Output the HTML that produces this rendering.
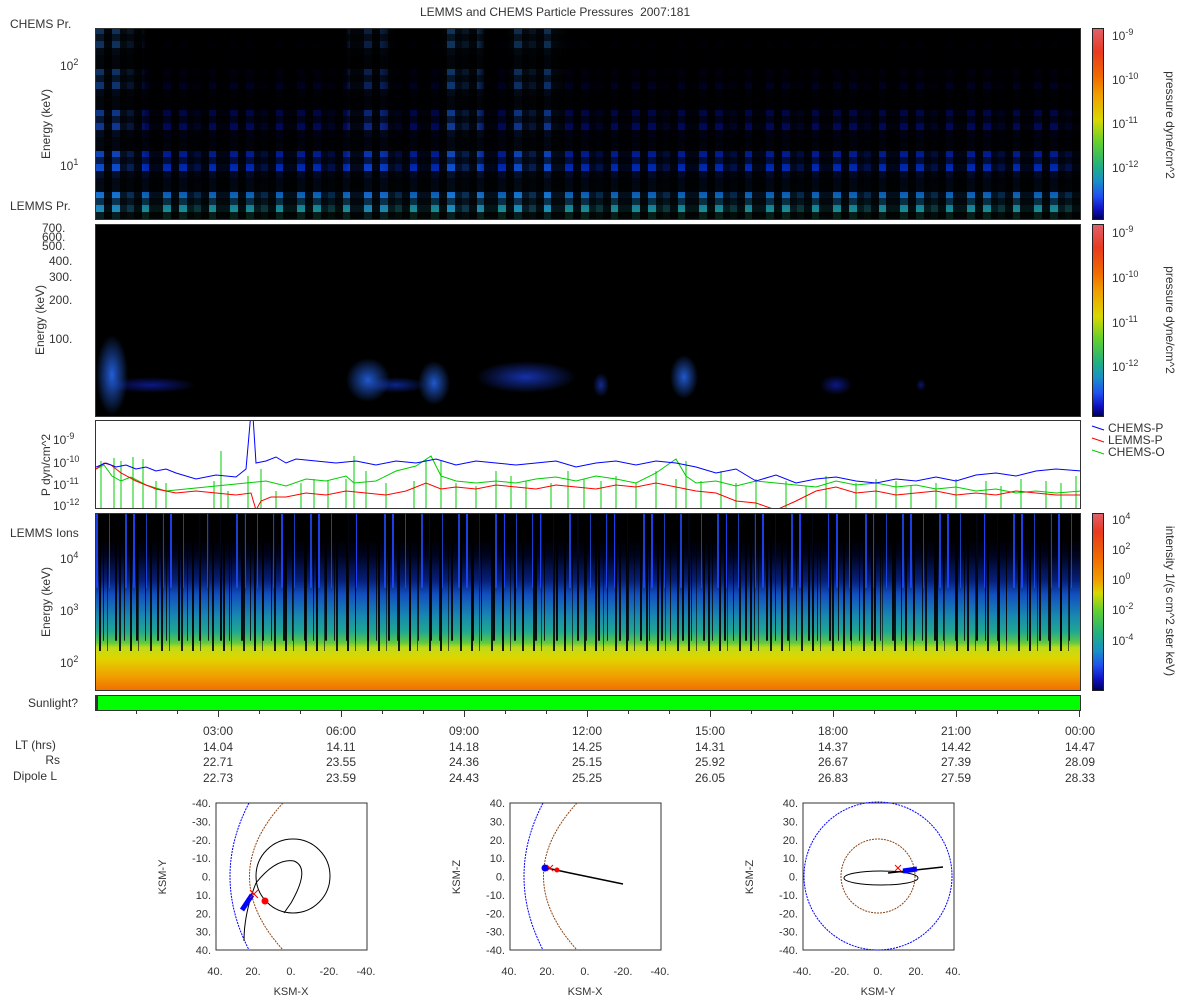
<!DOCTYPE html>
<html><head><meta charset="utf-8"><style>
*{margin:0;padding:0;box-sizing:border-box}
body{width:1200px;height:1000px;background:#fff;position:relative;overflow:hidden;font-family:"Liberation Sans",sans-serif;font-size:12px;color:#333}
.a{position:absolute}
.t{position:absolute;white-space:nowrap;line-height:12px}
.r{text-align:right}
.rot{transform:rotate(-90deg);transform-origin:center}
.rot90{transform:rotate(90deg);transform-origin:center}
.cb{position:absolute;left:1092px;width:12px;border:1px solid #222;background:linear-gradient(#e06068,#e83a20 12%,#f06a00 25%,#f0a000 35%,#d8d800 48%,#60d030 60%,#20b080 72%,#1890c8 80%,#2050f0 88%,#1010c0 95%,#000060)}
sup{font-size:9px;vertical-align:5px}
.tk{position:absolute;width:1px;height:6px;background:#333}
</style></head><body>
<div class="t" style="left:420px;top:6px">LEMMS and CHEMS Particle Pressures&nbsp; 2007:181</div>

<!-- Panel 1 -->
<div class="a" style="left:95px;top:28px;width:986px;height:192px;border:1px solid #333;background:
repeating-linear-gradient(90deg,transparent 0 8px,rgba(0,0,0,.9) 8px 16px,transparent 16px 24px,rgba(0,0,0,.8) 24px 31px,rgba(0,0,0,.6) 31px 38px,rgba(0,0,0,.9) 38px 46px,transparent 46px 53px,rgba(0,0,0,.85) 53px 67px),
repeating-linear-gradient(0deg,rgba(0,0,0,.8) 0 7px,transparent 7px 14px,rgba(0,0,0,.6) 14px 21px,transparent 21px 27px,rgba(0,0,0,.9) 27px 41px),
linear-gradient(90deg,rgba(40,140,255,.35) 0 35px,transparent 50px 250px,rgba(40,120,255,.25) 255px 285px,transparent 300px 345px,rgba(40,150,255,.35) 350px 380px,transparent 390px 410px,rgba(40,150,255,.3) 415px 460px,transparent 470px),
linear-gradient(#000 0,#000010 25%,#000a60 55%,#0030c0 78%,#1070b0 90%,#20a070 100%)"></div>
<div class="t" style="left:10px;top:18px">CHEMS Pr.</div>
<div class="t" style="left:10px;top:200px">LEMMS Pr.</div>
<div class="t" style="left:60px;top:56px">10<sup>2</sup></div>
<div class="t" style="left:60px;top:156px">10<sup>1</sup></div>
<div class="t rot" style="left:6px;top:118px;width:80px;text-align:center">Energy (keV)</div>
<div class="cb" style="top:28px;height:192px"></div>
<div class="t" style="left:1112px;top:26px">10<sup>-9</sup></div>
<div class="t" style="left:1112px;top:70px">10<sup>-10</sup></div>
<div class="t" style="left:1112px;top:114px">10<sup>-11</sup></div>
<div class="t" style="left:1112px;top:158px">10<sup>-12</sup></div>
<div class="t rot90" style="left:1115px;top:119px;width:110px;text-align:center">pressure dyne/cm^2</div>

<!-- Panel 2 -->
<div class="a" style="left:95px;top:224px;width:986px;height:193px;border:1px solid #333;background:
radial-gradient(ellipse 16px 40px at 16px 150px,rgba(40,110,255,.85),transparent),
radial-gradient(ellipse 45px 8px at 55px 160px,rgba(20,40,220,.6),transparent),
radial-gradient(ellipse 22px 22px at 272px 155px,rgba(40,110,255,.8),transparent),
radial-gradient(ellipse 30px 8px at 300px 160px,rgba(20,60,230,.6),transparent),
radial-gradient(ellipse 16px 22px at 338px 158px,rgba(40,110,255,.8),transparent),
radial-gradient(ellipse 50px 16px at 430px 152px,rgba(30,70,240,.7),transparent),
radial-gradient(ellipse 8px 12px at 505px 160px,rgba(30,70,240,.6),transparent),
radial-gradient(ellipse 14px 22px at 588px 152px,rgba(40,110,255,.8),transparent),
radial-gradient(ellipse 16px 10px at 740px 160px,rgba(20,40,220,.6),transparent),
radial-gradient(ellipse 5px 6px at 825px 160px,rgba(20,40,220,.5),transparent),#000"></div>
<div class="t" style="left:42px;top:224px;line-height:9px">700.<br>600.<br>500.</div>
<div class="t" style="left:49px;top:255px">400.</div>
<div class="t" style="left:49px;top:271px">300.</div>
<div class="t" style="left:49px;top:294px">200.</div>
<div class="t" style="left:49px;top:333px">100.</div>
<div class="t rot" style="left:0px;top:314px;width:80px;text-align:center">Energy (keV)</div>
<div class="cb" style="top:224px;height:193px"></div>
<div class="t" style="left:1112px;top:223px">10<sup>-9</sup></div>
<div class="t" style="left:1112px;top:268px">10<sup>-10</sup></div>
<div class="t" style="left:1112px;top:313px">10<sup>-11</sup></div>
<div class="t" style="left:1112px;top:357px">10<sup>-12</sup></div>
<div class="t rot90" style="left:1115px;top:314px;width:110px;text-align:center">pressure dyne/cm^2</div>

<!-- Panel 3 -->
<div class="a" style="left:95px;top:420px;width:986px;height:89px;border:1px solid #333;background:#fff;overflow:hidden">
<svg width="986" height="89" viewBox="0 0 986 89">
<g stroke="#0c0" stroke-width="1" fill="none">
<path d="M5 40V89M18 37V89M25 40V89M37 36V89M47 38V89M60 60V89M70 62V89M118 60V89M125 30V89M132 70V89M152 55V89M165 48V89M180 70V89M205 62V89M218 58V89M232 60V89M250 58V89M258 35V89M270 50V89M290 62V89M318 60V89M330 38V89M345 40V89M360 62V89M380 65V89M400 50V89M415 55V89M430 60V89M455 62V89M472 50V89M488 58V89M505 60V89M520 55V89M540 62V89M560 50V89M580 58V89M590 40V89M605 60V89M625 50V89M640 62V89M660 58V89M690 60V89M710 65V89M730 55V89M760 62V89M780 58V89M800 60V89M815 65V89M840 62V89M860 58V89M890 60V89M905 65V89M925 58V89M950 60V89M965 62V89M980 55V89"/>
<path d="M0 48 8 44 16 55 25 60 35 56 50 64 70 70 90 68 120 65 150 62 170 60 190 65 210 58 230 60 250 55 258 62 280 60 300 50 320 45 335 35 345 55 360 60 380 62 400 60 420 62 440 58 460 56 480 60 500 55 520 58 540 62 560 52 580 38 590 55 600 62 620 60 640 65 660 60 680 62 700 64 720 66 740 60 760 64 780 62 800 66 820 64 840 68 860 66 880 70 900 68 920 72 940 70 960 72 986 70"/>
</g>
<polyline fill="none" stroke="#f00" stroke-width="1" points="0 48 8 42 15 44 25 52 40 60 60 68 80 72 100 70 120 72 140 74 155 72 160 89 165 80 175 76 190 76 210 72 230 74 250 70 270 72 290 74 310 70 330 62 345 68 360 66 380 68 400 64 420 66 440 68 460 64 480 66 500 68 520 64 540 66 560 62 580 66 600 70 620 72 640 80 660 82 680 89 700 80 720 70 740 66 760 72 780 70 800 74 820 72 840 70 860 74 880 72 900 74 920 70 940 72 960 74 986 74"/>
<polyline fill="none" stroke="#00f" stroke-width="1" points="0 46 10 42 20 46 30 44 40 48 50 46 60 50 70 48 80 52 100 58 120 54 140 56 150 48 156 -20 160 42 170 40 180 36 190 42 200 38 220 40 240 42 260 40 280 44 300 40 320 42 340 38 360 44 380 40 400 42 420 44 440 42 460 40 480 46 500 42 520 40 540 44 560 40 580 42 600 46 620 52 640 48 660 60 680 54 700 62 720 58 740 56 760 60 780 62 800 58 820 60 840 56 860 60 880 54 900 52 920 55 940 50 960 48 986 50"/>
</svg></div>
<div class="t" style="left:53px;top:430px">10<sup>-9</sup></div>
<div class="t" style="left:53px;top:453px">10<sup>-10</sup></div>
<div class="t" style="left:53px;top:475px">10<sup>-11</sup></div>
<div class="t" style="left:53px;top:496px">10<sup>-12</sup></div>
<div class="t rot" style="left:1px;top:459px;width:90px;text-align:center">P dyn/cm^2</div>
<svg class="a" style="left:1090px;top:420px" width="20" height="50"><path d="M2 6 14 10" stroke="#00f"/><path d="M2 18 14 22" stroke="#f00"/><path d="M2 30 14 34" stroke="#0c0"/></svg>
<div class="t" style="left:1108px;top:422px;line-height:12px">CHEMS-P<br>LEMMS-P<br>CHEMS-O</div>

<!-- Panel 4 -->
<div class="a" style="left:95px;top:513px;width:986px;height:178px;border:1px solid #333;background:
repeating-linear-gradient(90deg,transparent 0 3px,rgba(0,0,0,.9) 3px 5px,transparent 5px 11px,rgba(0,0,0,.6) 11px 12px,transparent 12px 23px,rgba(0,0,0,.85) 23px 25px,transparent 25px 31px) 0 0/100% 78% no-repeat,
repeating-linear-gradient(90deg,transparent 0 7px,rgba(0,0,0,.8) 7px 8px,transparent 8px 19px,rgba(0,0,0,.9) 19px 21px) 0 0/100% 72% no-repeat,
repeating-linear-gradient(90deg,rgba(30,70,255,.9) 0 2px,transparent 2px 13px,rgba(30,90,255,.7) 13px 14px,transparent 14px 29px,rgba(30,80,255,.8) 29px 31px,transparent 31px 37px) 0 0/100% 42% no-repeat,
linear-gradient(#000 0,#000 14%,#000420 24%,#06207a 38%,#1250c0 46%,#1888b0 58%,#20a890 67%,#60c840 73%,#c0dc18 76%,#e0d400 82%,#f0a000 92%,#f07000 100%)"></div>
<div class="t" style="left:10px;top:527px">LEMMS Ions</div>
<div class="t" style="left:60px;top:549px">10<sup>4</sup></div>
<div class="t" style="left:60px;top:601px">10<sup>3</sup></div>
<div class="t" style="left:60px;top:653px">10<sup>2</sup></div>
<div class="t rot" style="left:6px;top:596px;width:80px;text-align:center">Energy (keV)</div>
<div class="cb" style="top:513px;height:178px;background:linear-gradient(#e06068,#e83a20 10%,#f06a00 25%,#f0a000 38%,#d8d800 45%,#60d030 55%,#20b080 68%,#1890c8 78%,#2050f0 86%,#1010c0 94%,#000060)"></div>
<div class="t" style="left:1112px;top:510px">10<sup>4</sup></div>
<div class="t" style="left:1112px;top:540px">10<sup>2</sup></div>
<div class="t" style="left:1112px;top:570px">10<sup>0</sup></div>
<div class="t" style="left:1112px;top:600px">10<sup>-2</sup></div>
<div class="t" style="left:1112px;top:631px">10<sup>-4</sup></div>
<div class="t rot90" style="left:1090px;top:595px;width:160px;text-align:center">intensity 1/(s cm^2 ster keV)</div>

<!-- Sunlight -->
<div class="a" style="left:95px;top:695px;width:986px;height:16px;border:1px solid #333;border-left:3px solid #333;background:#0f0"></div>
<div class="t" style="left:28px;top:697px">Sunlight?</div>
<div class="tk" style="left:136px;top:711px;height:3px"></div><div class="tk" style="left:177px;top:711px;height:3px"></div><div class="tk" style="left:218px;top:711px"></div>
<div class="tk" style="left:259px;top:711px;height:3px"></div><div class="tk" style="left:300px;top:711px;height:3px"></div><div class="tk" style="left:341px;top:711px"></div>
<div class="tk" style="left:382px;top:711px;height:3px"></div><div class="tk" style="left:423px;top:711px;height:3px"></div><div class="tk" style="left:464px;top:711px"></div>
<div class="tk" style="left:505px;top:711px;height:3px"></div><div class="tk" style="left:546px;top:711px;height:3px"></div><div class="tk" style="left:587px;top:711px"></div>
<div class="tk" style="left:628px;top:711px;height:3px"></div><div class="tk" style="left:669px;top:711px;height:3px"></div><div class="tk" style="left:710px;top:711px"></div>
<div class="tk" style="left:751px;top:711px;height:3px"></div><div class="tk" style="left:792px;top:711px;height:3px"></div><div class="tk" style="left:833px;top:711px"></div>
<div class="tk" style="left:874px;top:711px;height:3px"></div><div class="tk" style="left:915px;top:711px;height:3px"></div><div class="tk" style="left:956px;top:711px"></div>
<div class="tk" style="left:997px;top:711px;height:3px"></div><div class="tk" style="left:1038px;top:711px;height:3px"></div><div class="tk" style="left:1079px;top:711px"></div>

<div class="t" style="left:15px;top:739px">LT (hrs)</div>
<div class="t r" style="left:20px;top:754px;width:40px">Rs</div>
<div class="t" style="left:13px;top:770px">Dipole L</div>
<div class="t" style="left:198px;top:724px;width:40px;text-align:center;line-height:15.5px">03:00<br>14.04<br>22.71<br>22.73</div>
<div class="t" style="left:321px;top:724px;width:40px;text-align:center;line-height:15.5px">06:00<br>14.11<br>23.55<br>23.59</div>
<div class="t" style="left:444px;top:724px;width:40px;text-align:center;line-height:15.5px">09:00<br>14.18<br>24.36<br>24.43</div>
<div class="t" style="left:567px;top:724px;width:40px;text-align:center;line-height:15.5px">12:00<br>14.25<br>25.15<br>25.25</div>
<div class="t" style="left:690px;top:724px;width:40px;text-align:center;line-height:15.5px">15:00<br>14.31<br>25.92<br>26.05</div>
<div class="t" style="left:813px;top:724px;width:40px;text-align:center;line-height:15.5px">18:00<br>14.37<br>26.67<br>26.83</div>
<div class="t" style="left:936px;top:724px;width:40px;text-align:center;line-height:15.5px">21:00<br>14.42<br>27.39<br>27.59</div>
<div class="t" style="left:1060px;top:724px;width:40px;text-align:center;line-height:15.5px">00:00<br>14.47<br>28.09<br>28.33</div>

<!-- Orbit plots -->
<svg class="a" style="left:150px;top:795px" width="1050" height="205" font-family="Liberation Sans,sans-serif" font-size="11" fill="#333">
<g transform="translate(66,8)">
<rect width="151" height="147" fill="#fff" stroke="#333"/>
<path d="M33 0Q-5 73 33 147" fill="none" stroke="#00f" stroke-dasharray="2 1"/>
<path d="M67 0Q0 73 67 147" fill="none" stroke="#8b4513" stroke-dasharray="2 1"/>
<circle cx="77" cy="73" r="37" fill="none" stroke="#000"/>
<path d="M28 138Q28 110 40 80Q60 55 78 58Q95 65 75 100L68 110" fill="none" stroke="#000"/>
<path d="M26 107 36 92" stroke="#00f" stroke-width="5"/>
<path d="M34 87l8 8M42 87l-8 8" stroke="#f00"/><circle cx="49" cy="98" r="3.5" fill="#f00"/>
</g>
<g transform="translate(360,8)">
<rect width="151" height="147" fill="#fff" stroke="#333"/>
<path d="M33 0Q-5 73 33 147" fill="none" stroke="#00f" stroke-dasharray="2 1"/>
<path d="M67 0Q0 73 67 147" fill="none" stroke="#8b4513" stroke-dasharray="2 1"/>
<path d="M32 64 60 70 113 81" fill="none" stroke="#000" stroke-width="1.5"/>
<circle cx="35" cy="65" r="3.5" fill="#00f"/><path d="M37 62l6 6M43 62l-6 6" stroke="#f00"/><circle cx="47" cy="67" r="2.5" fill="#f00"/>
</g>
<g transform="translate(653,8)">
<rect width="151" height="147" fill="#fff" stroke="#333"/>
<circle cx="75" cy="73" r="74" fill="none" stroke="#00f" stroke-dasharray="2 1"/>
<circle cx="75" cy="73" r="37" fill="none" stroke="#8b4513" stroke-dasharray="2 1"/>
<ellipse cx="78" cy="75" rx="37" ry="7" fill="none" stroke="#000"/>
<path d="M85 70 140 64" stroke="#000" stroke-width="1.5"/>
<path d="M100 68 114 66" stroke="#00f" stroke-width="5"/><path d="M92 62l6 6M98 62l-6 6" stroke="#f00"/>
</g>
<g text-anchor="end">
<text x="61" y="12">-40.</text><text x="61" y="30.4">-30.</text><text x="61" y="48.8">-20.</text><text x="61" y="67.1">-10.</text><text x="61" y="85.5">0.</text><text x="61" y="103.9">10.</text><text x="61" y="122.3">20.</text><text x="61" y="140.6">30.</text><text x="61" y="159">40.</text>
<text x="355" y="12">40.</text><text x="355" y="30.4">30.</text><text x="355" y="48.8">20.</text><text x="355" y="67.1">10.</text><text x="355" y="85.5">0.</text><text x="355" y="103.9">-10.</text><text x="355" y="122.3">-20.</text><text x="355" y="140.6">-30.</text><text x="355" y="159">-40.</text>
<text x="648" y="12">40.</text><text x="648" y="30.4">30.</text><text x="648" y="48.8">20.</text><text x="648" y="67.1">10.</text><text x="648" y="85.5">0.</text><text x="648" y="103.9">-10.</text><text x="648" y="122.3">-20.</text><text x="648" y="140.6">-30.</text><text x="648" y="159">-40.</text>
</g>
<g text-anchor="middle">
<text x="65" y="180">40.</text><text x="103" y="180">20.</text><text x="141" y="180">0.</text><text x="179" y="180">-20.</text><text x="216" y="180">-40.</text>
<text x="359" y="180">40.</text><text x="397" y="180">20.</text><text x="435" y="180">0.</text><text x="473" y="180">-20.</text><text x="510" y="180">-40.</text>
<text x="652" y="180">-40.</text><text x="690" y="180">-20.</text><text x="728" y="180">0.</text><text x="766" y="180">20.</text><text x="803" y="180">40.</text>
<text x="141" y="200">KSM-X</text><text x="435" y="200">KSM-X</text><text x="728" y="200">KSM-Y</text>
<text transform="translate(16,82) rotate(-90)">KSM-Y</text>
<text transform="translate(310,82) rotate(-90)">KSM-Z</text>
<text transform="translate(603,82) rotate(-90)">KSM-Z</text>
</g>
</svg>
</body></html>
